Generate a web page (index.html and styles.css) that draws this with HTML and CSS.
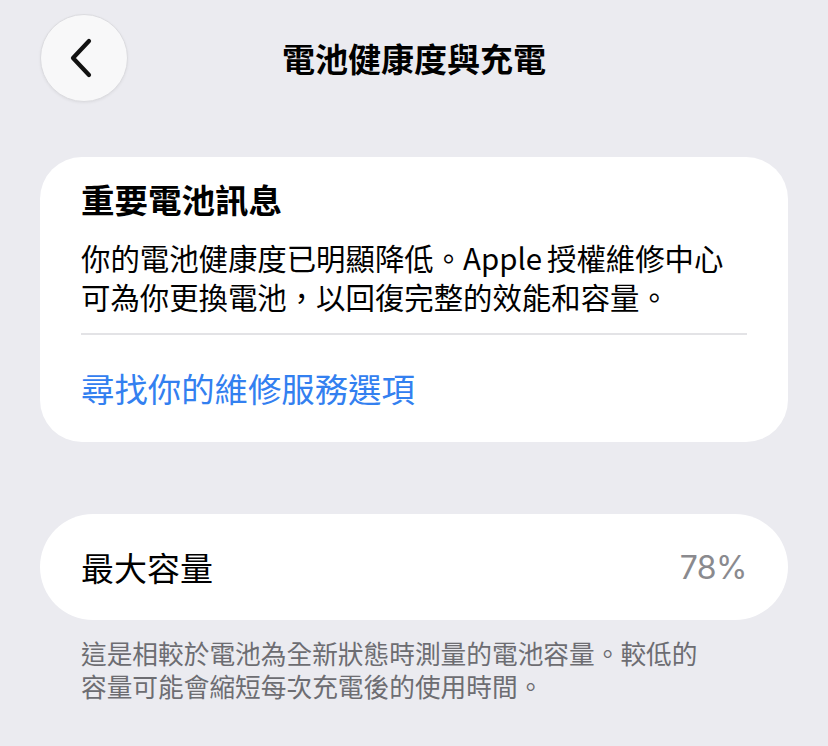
FILE: index.html
```html
<!DOCTYPE html>
<html lang="zh-Hant">
<head>
  <meta charset="UTF-8" />
  <meta name="viewport" content="width=device-width, initial-scale=1.0"/>
  <title>電池健康度與充電</title>
  <link rel="stylesheet" href="styles.css">
</head>
<body>

  <div class="header">
    <button class="back-btn" aria-label="返回">
      <svg width="26" height="40" viewBox="0 0 26 40">
        <path d="M21 3 L5 20 L21 37" fill="none" stroke="#111" stroke-width="4.2" stroke-linecap="round" stroke-linejoin="round"/>
      </svg>
    </button>
    <h1>電池健康度與充電</h1>
    <div class="spacer"></div>
  </div>

  <div class="content">
    <div class="card info-card">
      <h2>重要電池訊息</h2>
      <p class="info-text">你的電池健康度已明顯降低。Apple<span class="thin-gap"></span>授權維修中心<br>可為你更換電池，以回復完整的效能和容量。</p>
      <div class="divider"></div>
      <a href="#" class="link">尋找你的維修服務選項</a>
    </div>

    <div class="card row-card">
      <span class="row-label">最大容量</span>
      <span class="row-value">78%</span>
    </div>
    <p class="footnote">這是相較於電池為全新狀態時測量的電池容量。較低的<br>容量可能會縮短每次充電後的使用時間。</p>
  </div>

</body>
</html>
```

FILE: styles.css
```css
body {
  margin: 0;
  font-family: "Noto Sans CJK TC", "Noto Sans", sans-serif;
  background-color: #ebebf0;
  color: #000;
}
.header {
  display: flex;
  align-items: center;
  justify-content: space-between;
  padding: 14px 40px 0;
  height: 88px;
}
.back-btn {
  width: 88px;
  height: 88px;
  border-radius: 50%;
  border: 1px solid #dcdce0;
  background-color: #f8f8f9;
  box-shadow: 0 1px 3px rgba(0,0,0,0.06);
  display: flex;
  align-items: center;
  justify-content: center;
  padding: 0 6px 0 0;
  cursor: pointer;
}
.spacer {
  width: 88px;
}
.header h1 {
  margin: 0;
  font-size: 33px;
  font-weight: 700;
  line-height: 40px;
}
.content {
  padding: 55px 40px 0;
}
.card {
  background-color: #fff;
  border-radius: 42px;
}
.info-card {
  padding: 22px 41px 34px;
}
.info-card h2 {
  margin: 0;
  font-size: 33.5px;
  font-weight: 700;
  line-height: 40px;
}
.info-text {
  margin: 19px 0 0;
  font-size: 29.4px;
  line-height: 39px;
  white-space: nowrap;
}
.thin-gap {
  display: inline-block;
  width: 5px;
}
.divider {
  height: 2px;
  background-color: #e3e3e6;
  margin-top: 17px;
}
.link {
  display: block;
  margin-top: 33px;
  font-size: 33.4px;
  line-height: 40px;
  color: #3380f0;
  text-decoration: none;
}
.row-card {
  margin-top: 72px;
  height: 106px;
  border-radius: 53px;
  padding: 0 41px;
  display: flex;
  align-items: center;
  justify-content: space-between;
}
.row-label {
  font-size: 33px;
}
.row-value {
  font-family: Inter, "Noto Sans CJK TC", sans-serif;
  font-size: 32px;
  letter-spacing: -0.5px;
  color: #8a8a8e;
}
.footnote {
  margin: 16px 0 0;
  padding: 0 41px;
  font-size: 25.7px;
  line-height: 33px;
  color: #6d6d72;
}
```
